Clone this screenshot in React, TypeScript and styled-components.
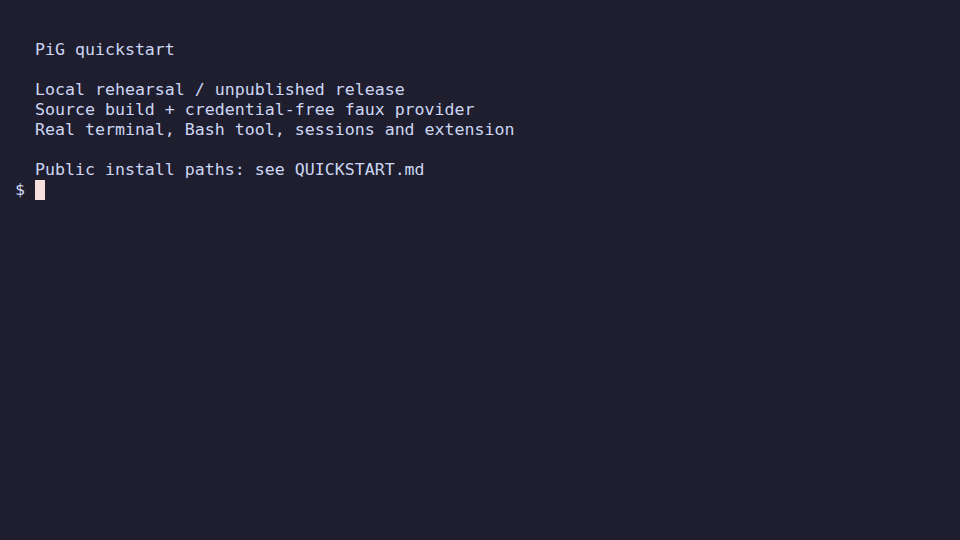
import React from "react";
import styled, { createGlobalStyle } from "styled-components";

const Global = createGlobalStyle`
  html, body { margin: 0; padding: 0; background: #1e1e2e; }
  body { width: 960px; height: 540px; overflow: hidden; }
`;

const Screen = styled.div`
  width: 960px;
  height: 540px;
  box-sizing: border-box;
  background: #1e1e2e;
  padding: 0 0 0 15px;
  font-family: "DejaVu Sans Mono", "Liberation Mono", monospace;
  font-size: 16.6px;
  line-height: 20px;
  color: #cdd6f4;
  display: flex;
  flex-direction: column;
`;

const Line = styled.div`
  height: 20px;
  white-space: pre;
`;

const Cursor = styled.span`
  display: inline-block;
  width: 10px;
  height: 20px;
  vertical-align: top;
  background: #f5e0dc;
`;

const lines = [
  "",
  "",
  "  PiG quickstart",
  "",
  "  Local rehearsal / unpublished release",
  "  Source build + credential-free faux provider",
  "  Real terminal, Bash tool, sessions and extension",
  "",
  "  Public install paths: see QUICKSTART.md",
];

export default function App() {
  return (
    <>
      <Global />
      <Screen>
        {lines.map((l, i) => (
          <Line key={i}>{l}</Line>
        ))}
        <Line>
          {"$ "}
          <Cursor />
        </Line>
      </Screen>
    </>
  );
}
